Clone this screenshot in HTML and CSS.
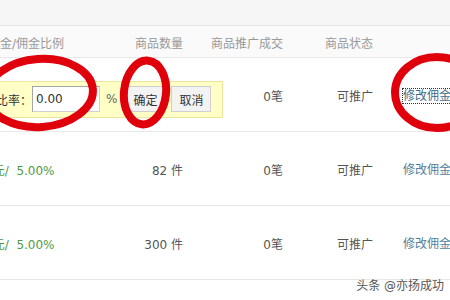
FILE: index.html
```html
<!DOCTYPE html>
<html lang="zh-CN">
<head>
    <meta charset="UTF-8">
    <meta name="viewport" content="width=device-width, initial-scale=1.0">
    <title>修改佣金</title>
    <link rel="stylesheet" href="styles.css">
</head>
<body>
    <div class="page">
        <div class="topbar"></div>

        <!-- Table header -->
        <div class="row head">
            <div class="c1">佣金/佣金比例</div>
            <div class="c2">商品数量</div>
            <div class="c3">商品推广成交</div>
            <div class="c4">商品状态</div>
            <div class="c5"></div>
        </div>

        <!-- Row being edited -->
        <div class="row">
            <div class="c1 span2">
                <form class="edit-bar">
                    <label for="rate">佣金比率：</label>
                    <input type="text" id="rate" value="0.00">
                    <span class="pct">%</span>
                    <button type="button" class="btn">确定</button>
                    <button type="button" class="btn btn-cancel">取消</button>
                </form>
            </div>
            <div class="c3">0笔</div>
            <div class="c4">可推广</div>
            <div class="c5"><a href="#" class="edit-link focused">修改佣金</a></div>
        </div>

        <div class="row">
            <div class="c1 green">0.80元/&nbsp; 5.00%</div>
            <div class="c2">82 件</div>
            <div class="c3">0笔</div>
            <div class="c4">可推广</div>
            <div class="c5"><a href="#" class="edit-link">修改佣金</a></div>
        </div>

        <div class="row">
            <div class="c1 green">0.80元/&nbsp; 5.00%</div>
            <div class="c2">300 件</div>
            <div class="c3">0笔</div>
            <div class="c4">可推广</div>
            <div class="c5"><a href="#" class="edit-link">修改佣金</a></div>
        </div>

        <!-- Hand drawn red marks -->
        <svg class="marks" width="450" height="300" viewBox="0 0 450 300">
            <ellipse cx="40" cy="93" rx="53" ry="34" transform="rotate(-4 40 93)"/>
            <ellipse cx="145" cy="92.5" rx="21" ry="32" stroke-width="7" transform="rotate(6 145 92.5)"/>
            <ellipse cx="437" cy="92.5" rx="42" ry="35.5"/>
        </svg>

        <div class="watermark">头条 @亦扬成功</div>
    </div>
</body>
</html>
```

FILE: styles.css
```css
body {
    margin: 0;
    background: #fff;
    font-family: "DejaVu Sans", "Noto Sans CJK SC", sans-serif;
    font-size: 12px;
    color: #555;
}
.page {
    position: relative;
    width: 450px;
    height: 300px;
    overflow: hidden;
}
.topbar {
    height: 25px;
    background: #f6f6f6;
    border-bottom: 1px solid #e4e4e4;
}

/* Table rows */
.row {
    display: grid;
    grid-template-columns: 160px 63px 100px 90px 1fr;
    align-items: center;
    width: 530px;
    margin-left: -40px;
    height: 74px;
    padding-top: 2px;
    box-sizing: border-box;
    border-bottom: 1px solid #e8e8e8;
    white-space: nowrap;
}
.row > div {
    min-width: 0;
}
.row.head {
    height: 32px;
    background: #fafafa;
    color: #999;
}
.c1 {
    padding-left: 6px;
}
.head .c1 {
    padding-left: 28px;
}
.c2, .c3, .c4 {
    text-align: right;
}
.c5 {
    padding-left: 30px;
}
.span2 {
    grid-column: span 2;
    padding-left: 3px;
}
.green {
    color: #4f9a3f;
}

/* Inline edit bar */
.edit-bar {
    display: inline-flex;
    align-items: center;
    height: 37px;
    margin: 7px 0 0;
    padding: 0 11px 0 8px;
    box-sizing: border-box;
    background: #ffffc6;
    border: 1px solid #eee49a;
    color: #333;
}
.edit-bar label {
    width: 60px;
    font-family: "Noto Sans CJK SC", sans-serif;
}
.edit-bar input[type="text"] {
    width: 68px;
    height: 26px;
    padding: 0 0 0 3px;
    box-sizing: border-box;
    border: 1px solid #a6a6a6;
    border-bottom-color: #d0d0d0;
    border-right-color: #d0d0d0;
    font-family: "DejaVu Sans", sans-serif;
    font-size: 12px;
    color: #333;
    background: #fff;
}
.pct {
    margin: 0 8px 0 6px;
    color: #666;
}
.btn {
    width: 40px;
    height: 26px;
    padding: 0;
    border: 1px solid #cfcfcf;
    background: #f3f3f3;
    font-family: "Noto Sans CJK SC", sans-serif;
    font-size: 12px;
    color: #333;
}
.btn-cancel {
    margin-left: 6px;
}

.edit-link {
    color: #4f819b;
    text-decoration: none;
    line-height: 14px;
}
.edit-link.focused {
    color: #3d6c88;
    outline: 1px dotted #333;
}

/* Overlays */
.marks {
    position: absolute;
    left: 0;
    top: 0;
    pointer-events: none;
}
.marks ellipse {
    fill: none;
    stroke: #e0000c;
    stroke-width: 8;
}
.watermark {
    position: absolute;
    right: 6px;
    bottom: 7px;
    line-height: 14px;
    color: #555;
    text-shadow: 0 0 2px #fff, 0 0 2px #fff;
}
```
